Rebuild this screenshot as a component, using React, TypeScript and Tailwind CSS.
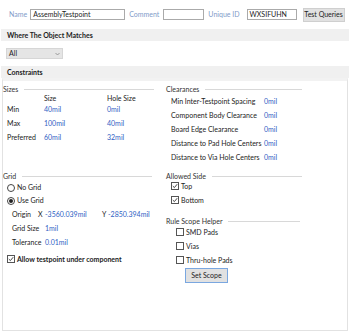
import React from 'react';

const label = 'text-[#7f9bc9]';
const value = 'text-[#2f62c4]';

const SectionTitle: React.FC<{ title: string; lineClass: string }> = ({ title, lineClass }) => (
  <div className="flex items-center h-[12px]">
    <span className="text-[#333]">{title}</span>
    <div className={`h-px bg-[#d8d8d8] ml-[6px] ${lineClass}`}></div>
  </div>
);

const Check: React.FC<{ checked?: boolean }> = ({ checked }) => (
  <span className="w-[8px] h-[8px] border border-[#555] bg-white flex items-center justify-center mr-[2px] shrink-0">
    {checked && (
      <svg width="6" height="6" viewBox="0 0 6 6">
        <path d="M0.8 3.1 L2.4 4.6 L5.2 1.2" fill="none" stroke="#333" strokeWidth="0.9" />
      </svg>
    )}
  </span>
);

const Radio: React.FC<{ checked?: boolean }> = ({ checked }) => (
  <span className="w-[8px] h-[8px] rounded-full border border-[#444] bg-white flex items-center justify-center mr-[2px] shrink-0">
    {checked && <span className="w-[4px] h-[4px] rounded-full bg-[#222]"></span>}
  </span>
);

export default function App() {
  return (
    <div
      className="w-[350px] h-[332px] bg-white text-[7px] leading-[9px] text-[#222] overflow-hidden flex flex-col whitespace-nowrap"
      style={{ fontFamily: 'Lato, "Noto Sans", sans-serif' }}
    >
      {/* Top row */}
      <div className="h-[29px] flex items-center pl-[9px]">
        <span className={`${label} mr-[3px]`}>Name</span>
        <div className="w-[95px] h-[11px] border border-[#aaa] px-[2px] flex items-center">AssemblyTestpoint</div>
        <span className={`${label} ml-[4px] mr-[4px]`}>Comment</span>
        <div className="w-[41px] h-[11px] border border-[#aaa]"></div>
        <span className={`${label} ml-[4px] mr-[7px]`}>Unique ID</span>
        <div className="w-[50px] h-[11px] border border-[#aaa] px-[2px] flex items-center">WXSIFUHN</div>
        <button className="ml-[6px] w-[42px] h-[14px] bg-[#e1e1e1] border border-[#cfcfcf] flex items-center justify-center text-[#222]">
          Test Queries
        </button>
      </div>

      {/* Where the object matches */}
      <div className="h-[12px] bg-[#f0f0f0] flex items-center pl-[6px] font-bold mx-[1px]">Where The Object Matches</div>
      <div className="h-[25px] flex items-center pl-[6px]">
        <div className="w-[57px] h-[11px] bg-[#e5e5e5] border border-[#d6d6d6] flex items-center justify-between px-[2px]">
          <span>All</span>
          <svg width="5" height="4" viewBox="0 0 5 4">
            <path d="M0.5 1 L2.5 3 L4.5 1" fill="none" stroke="#888" strokeWidth="0.8" />
          </svg>
        </div>
      </div>

      {/* Constraints */}
      <div className="h-[12px] bg-[#f0f0f0] flex items-center pl-[6px] font-bold mx-[1px]">Constraints</div>
      <div className="flex-1 border border-[#e2e2e2] border-t-[3px] border-t-[#f2f2f2] mx-[2px] mb-[1px] flex pt-[2px]">
        {/* Left column */}
        <div className="w-[162px] flex flex-col">
          <SectionTitle title="Sizes" lineClass="w-[130px]" />
          <div className="pl-[4px]">
            <div className="flex h-[7px] items-center">
              <span className="w-[37px]"></span>
              <span className="w-[63px]">Size</span>
              <span>Hole Size</span>
            </div>
            {[
              ['Min', '40mil', '0mil'],
              ['Max', '100mil', '40mil'],
              ['Preferred', '60mil', '32mil'],
            ].map(([n, s, h]) => (
              <div key={n} className="flex h-[14px] items-center">
                <span className="w-[37px]">{n}</span>
                <span className={`w-[63px] ${value}`}>{s}</span>
                <span className={value}>{h}</span>
              </div>
            ))}
          </div>

          <div className="mt-[26px]">
            <SectionTitle title="Grid" lineClass="w-[130px]" />
          </div>
          <div className="pl-[4px] flex flex-col -mt-[1px]">
            <div className="flex items-center h-[13px]">
              <Radio />
              <span>No Grid</span>
            </div>
            <div className="flex items-center h-[13px]">
              <Radio checked />
              <span>Use Grid</span>
            </div>
            <div className="pl-[5px]">
              <div className="flex items-center h-[14px]">
                <span className="w-[26px]">Origin</span>
                <span className="w-[7px]">X</span>
                <span className={`w-[57px] ${value}`}>-3560.039mil</span>
                <span className="w-[6px]">Y</span>
                <span className={value}>-2850.394mil</span>
              </div>
              <div className="flex items-center h-[14px]">
                <span className="w-[33px]">Grid Size</span>
                <span className={value}>1mil</span>
              </div>
              <div className="flex items-center h-[14px]">
                <span className="w-[33px]">Tolerance</span>
                <span className={value}>0.01mil</span>
              </div>
            </div>
            <div className="flex items-center h-[14px] mt-[3px] font-bold">
              <Check checked />
              <span>Allow testpoint under component</span>
            </div>
          </div>
        </div>

        {/* Right column */}
        <div className="pl-[1px] flex flex-col">
          <SectionTitle title="Clearances" lineClass="w-[97px]" />
          <div className="pl-[5px] -mt-[1px]">
            {[
              'Min Inter-Testpoint Spacing',
              'Component Body Clearance',
              'Board Edge Clearance',
              'Distance to Pad Hole Centers',
              'Distance to Via Hole Centers',
            ].map((t) => (
              <div key={t} className="flex items-center h-[14px]">
                <span className="w-[93px]">{t}</span>
                <span className={value}>0mil</span>
              </div>
            ))}
          </div>

          <div className="mt-[6px]">
            <SectionTitle title="Allowed Side" lineClass="w-[90px]" />
          </div>
          <div className="pl-[5px] -mt-[3px]">
            <div className="flex items-center h-[14px]">
              <Check checked />
              <span>Top</span>
            </div>
            <div className="flex items-center h-[14px]">
              <Check checked />
              <span>Bottom</span>
            </div>
          </div>

          <div className="mt-[8px]">
            <SectionTitle title="Rule Scope Helper" lineClass="w-[72px]" />
          </div>
          <div className="pl-[10px] -mt-[2px]">
            {['SMD Pads', 'Vias', 'Thru-hole Pads'].map((t) => (
              <div key={t} className="flex items-center h-[14px]">
                <Check />
                <span>{t}</span>
              </div>
            ))}
            <button className="ml-[9px] mt-[1px] w-[43px] h-[15px] bg-[#e1e1e1] border border-[#7aa7e0] flex items-center justify-center text-[#222]">
              Set Scope
            </button>
          </div>
        </div>
      </div>
    </div>
  );
}
